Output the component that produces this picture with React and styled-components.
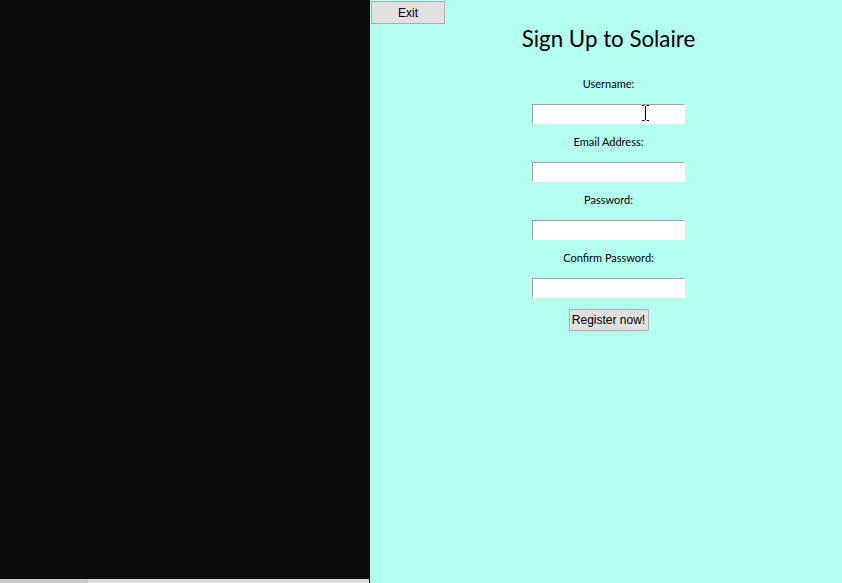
import React from 'react';
import styled, { createGlobalStyle } from 'styled-components';

const GlobalStyle = createGlobalStyle`
  html, body {
    margin: 0;
    padding: 0;
    overflow: hidden;
  }
`;

// Whole window split in two panes
const Window = styled.div`
  display: flex;
  width: 842px;
  height: 583px;
`;

// Dark side pane with a scrollbar track at the bottom
const SidePane = styled.div`
  width: 369px;
  display: flex;
  flex-direction: column;
  background: #0d0d0d;
  border-right: 1px solid #070707;
`;

const SideFill = styled.div`
  flex: 1;
`;

const ScrollTrack = styled.div`
  height: 4px;
  display: flex;
  background: #dcdcdc;
`;

const ScrollThumb = styled.div`
  width: 87px;
  background: #c9c9c9;
  border-right: 1px solid #bdbdbd;
`;

// Sign-up pane
const FormPane = styled.div`
  position: relative;
  flex: 1;
  display: flex;
  flex-direction: column;
  background: #b4fff0;
`;

const WinButton = styled.button`
  box-sizing: border-box;
  width: ${(p) => p.$width}px;
  height: ${(p) => p.$height}px;
  padding: 0;
  background: #e1e1e1;
  border: 1px solid #adadad;
  border-radius: 0;
  font-family: "Liberation Sans", Arial, sans-serif;
  font-size: 12px;
  color: #000;
`;

const TopBar = styled.div`
  display: flex;
  padding: 1px 0 0 1px;
`;

const Form = styled.div`
  display: flex;
  flex-direction: column;
  align-items: center;
  padding-left: 5px;
`;

const Title = styled.h1`
  margin: 2px 0 26px;
  font-family: Lato, "Open Sans", sans-serif;
  font-weight: 400;
  font-size: 22.3px;
  line-height: 26px;
  color: #000;
`;

const Label = styled.label`
  font-family: Lato, "Open Sans", sans-serif;
  font-size: 11px;
  line-height: 12px;
  color: #000;
  margin-bottom: 14px;
`;

const Field = styled.input`
  box-sizing: border-box;
  width: 153px;
  height: 20px;
  margin: 0 0 12px;
  padding: 0 2px;
  background: #fff;
  border: 1px solid;
  border-color: #a0a0a0 #fff #fff #a0a0a0;
  outline: none;
`;

const Cursor = styled.svg`
  position: absolute;
  left: 272px;
  top: 105px;
`;

const fields = ['Username:', 'Email Address:', 'Password:', 'Confirm Password:'];

const App = () => {
  return (
    <Window>
      <GlobalStyle />
      <SidePane>
        <SideFill />
        <ScrollTrack>
          <ScrollThumb />
        </ScrollTrack>
      </SidePane>
      <FormPane>
        <TopBar>
          <WinButton $width={74} $height={23}>Exit</WinButton>
        </TopBar>
        <Form>
          <Title>Sign Up to Solaire</Title>
          {fields.map((f) => (
            <React.Fragment key={f}>
              <Label>{f}</Label>
              <Field type={f.includes('Password') ? 'password' : 'text'} />
            </React.Fragment>
          ))}
          <WinButton $width={80} $height={22} style={{ marginTop: -1 }}>
            Register now!
          </WinButton>
        </Form>
        <Cursor width="7" height="16" viewBox="0 0 7 16">
          <path d="M0 0.5h2.5M4.5 0.5H7M0 15.5h2.5M4.5 15.5H7M3.5 1v14" stroke="#000" strokeWidth="1" fill="none" />
        </Cursor>
      </FormPane>
    </Window>
  );
};

export default App;
